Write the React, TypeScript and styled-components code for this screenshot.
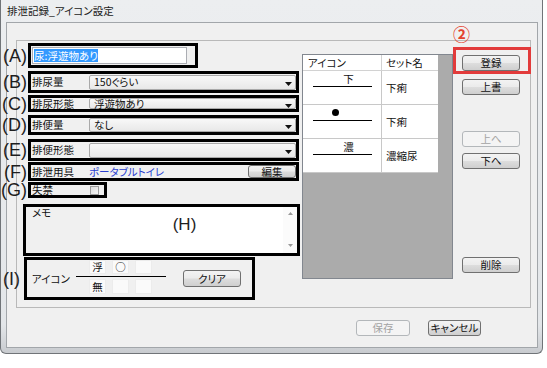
import React, { FC } from 'react';
import styled, { createGlobalStyle, css } from 'styled-components';

const GlobalStyle = createGlobalStyle`
  html, body {
    margin: 0;
    padding: 0;
    background: #fff;
  }
  body {
    font-family: 'Noto Sans CJK JP', 'Liberation Sans', sans-serif;
    font-size: 10.5px;
    line-height: 12px;
    color: #111;
    font-feature-settings: 'palt';
  }
`;

const Window = styled.div`
  box-sizing: border-box;
  width: 543px;
  height: 354px;
  padding: 0 4px 0 5px;
  border: 1px solid #707478;
  border-top: none;
  border-radius: 0 0 6px 6px;
  background: linear-gradient(180deg, #eceef0 0%, #e3e6e9 92%, #c8cbcf 100%);
  display: flex;
  flex-direction: column;
`;

const TitleBar = styled.div`
  height: 22px;
  display: flex;
  align-items: center;
  padding-left: 1px;
  color: #1a1a1a;
`;

const Client = styled.div`
  box-sizing: border-box;
  width: 532px;
  height: 326px;
  border: 1px solid #a2a6aa;
  background: #f0f0f0;
  display: flex;
  flex-direction: column;
`;

const Panel = styled.div`
  box-sizing: border-box;
  width: 515px;
  height: 268px;
  margin: 17px 0 0 9px;
  border: 1px solid #b9b9b9;
  display: flex;
  align-items: flex-start;
`;

const FormColumn = styled.div`
  width: 277px;
  margin: 2px 0 0 6px;
  display: flex;
  flex-direction: column;
  align-items: flex-start;
`;

const Annot = styled.div<{ $w: number; $h: number; $mt?: number; $ml?: number }>`
  position: relative;
  box-sizing: border-box;
  width: ${p => p.$w}px;
  height: ${p => p.$h}px;
  margin: ${p => p.$mt ?? 0}px 0 0 ${p => p.$ml ?? 5}px;
  border: 3px solid #000;
  display: flex;
`;

const Inner = styled.div<{ $align?: string }>`
  flex: 1;
  min-width: 0;
  display: flex;
  align-items: ${p => p.$align ?? 'center'};
  line-height: 10px;
`;

const Letter = styled.span<{ $gap: number }>`
  position: absolute;
  top: 50%;
  right: calc(100% + ${p => p.$gap}px);
  transform: translateY(-50%);
  font-family: 'Liberation Sans', Arial, sans-serif;
  font-size: 18px;
  line-height: 18px;
  color: #1e1e1e;
  white-space: nowrap;
`;

const FieldLabel = styled.span<{ $w: number; $pl?: number; $pt?: number }>`
  flex: none;
  box-sizing: border-box;
  width: ${p => p.$w}px;
  padding-left: ${p => p.$pl ?? 1}px;
  padding-top: ${p => p.$pt ?? 0}px;
  white-space: nowrap;
`;

const TextInput = styled.div`
  box-sizing: border-box;
  width: 155px;
  height: 17px;
  margin-left: 1px;
  padding-left: 1px;
  background: #fff;
  border: 1px solid #abadb3;
  display: flex;
  align-items: center;
`;

const Selected = styled.span`
  background: #3399ff;
  color: #fff;
  line-height: 13px;
  white-space: nowrap;
`;

const Combo = styled.div<{ $h: number }>`
  flex: 1;
  box-sizing: border-box;
  height: ${p => p.$h}px;
  padding: 0 3px 0 4px;
  border: 1px solid #a9a9a9;
  border-radius: 2px;
  background: linear-gradient(#f8f8f8, #e8e8e8);
  display: flex;
  align-items: center;
  justify-content: space-between;
  white-space: nowrap;
`;

const ComboArrow = styled.svg`
  flex: none;
  margin-top: 4px;
`;

const LinkText = styled.span`
  flex: 1;
  color: #2a3fd0;
  white-space: nowrap;
`;

const Button = styled.div<{ $w: number; $h?: number; $mt?: number; $ml?: number; $disabled?: boolean }>`
  flex: none;
  box-sizing: border-box;
  width: ${p => p.$w}px;
  height: ${p => p.$h ?? 16}px;
  margin: ${p => p.$mt ?? 0}px 0 0 ${p => p.$ml ?? 0}px;
  border: 1px solid #707070;
  border-radius: 3px;
  background: linear-gradient(#f3f3f3 0%, #ebebeb 48%, #dddddd 52%, #cfcfcf 100%);
  display: flex;
  align-items: center;
  justify-content: center;
  line-height: 10px;
  white-space: nowrap;
  ${p =>
    p.$disabled &&
    css`
      border-color: #b3b7ba;
      background: #f4f4f4;
      color: #a3a3a3;
    `}
`;

const CheckBox = styled.div`
  box-sizing: border-box;
  width: 9px;
  height: 9px;
  border: 1px solid #9c9c9c;
  background: linear-gradient(135deg, #dcdcdc, #f6f6f6);
`;

const Memo = styled.div`
  flex: 1;
  align-self: stretch;
  background: #fff;
  display: flex;
`;

const MemoText = styled.div`
  flex: 1;
  display: flex;
  align-items: center;
  justify-content: center;
  padding: 0 4px 10px 0;
  font-family: 'Liberation Sans', Arial, sans-serif;
  font-size: 17px;
  line-height: 18px;
  color: #1e1e1e;
`;

const ScrollBar = styled.div`
  width: 14px;
  background: #fbfbfb;
  display: flex;
  flex-direction: column;
  align-items: center;
  justify-content: space-between;
  padding: 5px 0 6px;
`;

const IconEditor = styled.div`
  width: 90px;
  margin-left: 1px;
  display: flex;
  flex-direction: column;
  align-self: flex-start;
`;

const CellRow = styled.div<{ $h: number }>`
  display: flex;
  gap: 6px;
  padding-left: 13px;
  height: ${p => p.$h}px;
`;

const Cell = styled.div`
  box-sizing: border-box;
  width: 17px;
  height: 100%;
  background: #fafafa;
  border: 1px solid #ececec;
  display: flex;
  align-items: center;
  justify-content: center;
`;

const Rule = styled.div<{ $w: number; $my?: number }>`
  width: ${p => p.$w}px;
  height: 1px;
  margin: ${p => p.$my ?? 0}px 0;
  background: #000;
`;

const ListBox = styled.div`
  box-sizing: border-box;
  width: 151px;
  height: 225px;
  margin: 13px 0 0 2px;
  border: 1px solid #82878f;
  background: #ababab;
  display: flex;
  align-items: flex-start;
`;

const Table = styled.div`
  width: 135px;
  background: #fff;
  display: grid;
  grid-template-columns: 79px 56px;
`;

const HeadCell = styled.div<{ $pl: number; $divider?: boolean }>`
  box-sizing: border-box;
  height: 16px;
  padding-left: ${p => p.$pl}px;
  border-bottom: 1px solid #d2d2d2;
  border-right: ${p => (p.$divider ? '1px solid #d2d2d2' : 'none')};
  display: flex;
  align-items: center;
  white-space: nowrap;
`;

const IconCell = styled.div<{ $h: number }>`
  box-sizing: border-box;
  height: ${p => p.$h}px;
  padding: 1px 0 0 10px;
  border-bottom: 1px solid #c8c8c8;
  border-right: 1px solid #c8c8c8;
  display: flex;
  flex-direction: column;
`;

const Slots = styled.div`
  display: flex;
  height: 13px;
  padding-left: 16px;
`;

const Slot = styled.div`
  width: 13px;
  display: flex;
  align-items: center;
  justify-content: center;
`;

const Dot = styled.div`
  width: 7px;
  height: 7px;
  border-radius: 50%;
  background: #000;
`;

const NameCell = styled.div<{ $h: number }>`
  box-sizing: border-box;
  height: ${p => p.$h}px;
  padding-left: 4px;
  border-bottom: 1px solid #c8c8c8;
  display: flex;
  align-items: center;
  white-space: nowrap;
`;

const SideColumn = styled.div`
  width: 58px;
  margin: 14px 0 0 9px;
  display: flex;
  flex-direction: column;
`;

const Marked = styled.div`
  position: relative;
`;

const RedFrame = styled.div`
  position: absolute;
  left: -9px;
  top: -8px;
  right: -11px;
  bottom: -3px;
  border: 3px solid #e23b3b;
  pointer-events: none;
`;

const Circled = styled.span`
  position: absolute;
  left: -9px;
  top: -30px;
  font-size: 17px;
  font-weight: bold;
  line-height: 17px;
  color: #e4432f;
`;

const Footer = styled.div`
  display: flex;
  justify-content: flex-end;
  gap: 18px;
  margin-top: 12px;
  padding-right: 56px;
`;

const Arrow: FC = () => (
  <ComboArrow width={7} height={4} viewBox="0 0 7 4">
    <polygon points="0,0 7,0 3.5,4" fill="#111" />
  </ComboArrow>
);

const ScrollArrow: FC<{ up?: boolean }> = ({ up }) => (
  <svg width={5} height={3} viewBox="0 0 5 3">
    <polygon points={up ? '0,3 5,3 2.5,0' : '0,0 5,0 2.5,3'} fill="#9a9a9a" />
  </svg>
);

const comboRows = [
  { letter: 'B', label: '排尿量', value: '150ぐらい', h: 22, mt: 3, ch: 15 },
  { letter: 'C', label: '排尿形態', value: '浮遊物あり', h: 17, mt: 2, ch: 11 },
  { letter: 'D', label: '排便量', value: 'なし', h: 20, mt: 3, ch: 14 },
  { letter: 'E', label: '排便形態', value: '', h: 22, mt: 4, ch: 15 },
];

const iconSets = [
  { slots: ['', '下', ''], name: '下痢' },
  { slots: ['●', '', ''], name: '下痢' },
  { slots: ['', '濃', ''], name: '濃縮尿' },
];

const App: FC = () => {
  return (
    <>
      <GlobalStyle />
      <Window>
        <TitleBar>排泄記録_アイコン設定</TitleBar>
        <Client>
          <Panel>
            <FormColumn>
              <Annot $w={170} $h={25}>
                <Letter $gap={4}>(A)</Letter>
                <Inner>
                  <TextInput>
                    <Selected>尿:浮遊物あり</Selected>
                  </TextInput>
                </Inner>
              </Annot>

              {comboRows.map(row => (
                <Annot key={row.letter} $w={271} $h={row.h} $mt={row.mt}>
                  <Letter $gap={4}>({row.letter})</Letter>
                  <Inner>
                    <FieldLabel $w={58}>{row.label}</FieldLabel>
                    <Combo $h={row.ch}>
                      <span>{row.value}</span>
                      <Arrow />
                    </Combo>
                  </Inner>
                </Annot>
              ))}

              <Annot $w={271} $h={19} $mt={1}>
                <Letter $gap={4}>(F)</Letter>
                <Inner>
                  <FieldLabel $w={58}>排泄用具</FieldLabel>
                  <LinkText>ポータブルトイレ</LinkText>
                  <Button $w={48} $h={13}>編集</Button>
                </Inner>
              </Annot>

              <Annot $w={79} $h={16} $mt={1}>
                <Letter $gap={4}>(G)</Letter>
                <Inner>
                  <FieldLabel $w={59}>失禁</FieldLabel>
                  <CheckBox />
                </Inner>
              </Annot>

              <Annot $w={277} $h={52} $mt={6} $ml={0}>
                <Inner $align="stretch">
                  <FieldLabel $w={64} $pl={6} $pt={1}>メモ</FieldLabel>
                  <Memo>
                    <MemoText>(H)</MemoText>
                    <ScrollBar>
                      <ScrollArrow up />
                      <ScrollArrow />
                    </ScrollBar>
                  </Memo>
                </Inner>
              </Annot>

              <Annot $w={231} $h={43} $mt={1} $ml={1}>
                <Letter $gap={7}>(I)</Letter>
                <Inner>
                  <FieldLabel $w={48} $pl={5}>アイコン</FieldLabel>
                  <IconEditor>
                    <CellRow $h={14}>
                      <Cell>浮</Cell>
                      <Cell>○</Cell>
                      <Cell />
                    </CellRow>
                    <Rule $w={90} $my={2} />
                    <CellRow $h={15}>
                      <Cell>無</Cell>
                      <Cell />
                      <Cell />
                    </CellRow>
                  </IconEditor>
                  <Button $w={58} $h={17} $ml={17}>クリア</Button>
                </Inner>
              </Annot>
            </FormColumn>

            <ListBox>
              <Table>
                <HeadCell $pl={5} $divider>アイコン</HeadCell>
                <HeadCell $pl={4}>セット名</HeadCell>
                {iconSets.map((set, i) => (
                  <React.Fragment key={i}>
                    <IconCell $h={34}>
                      <Slots>
                        {set.slots.map((s, j) => (
                          <Slot key={j}>{s === '●' ? <Dot /> : s}</Slot>
                        ))}
                      </Slots>
                      <Rule $w={59} $my={1} />
                    </IconCell>
                    <NameCell $h={34}>{set.name}</NameCell>
                  </React.Fragment>
                ))}
              </Table>
            </ListBox>

            <SideColumn>
              <Marked>
                <Button $w={58}>登録</Button>
                <RedFrame />
                <Circled>②</Circled>
              </Marked>
              <Button $w={58} $mt={8}>上書</Button>
              <Button $w={58} $mt={36} $disabled>上へ</Button>
              <Button $w={58} $mt={6}>下へ</Button>
              <Button $w={58} $mt={88}>削除</Button>
            </SideColumn>
          </Panel>

          <Footer>
            <Button $w={54} $disabled>保存</Button>
            <Button $w={53}>キャンセル</Button>
          </Footer>
        </Client>
      </Window>
    </>
  );
};

export default App;
